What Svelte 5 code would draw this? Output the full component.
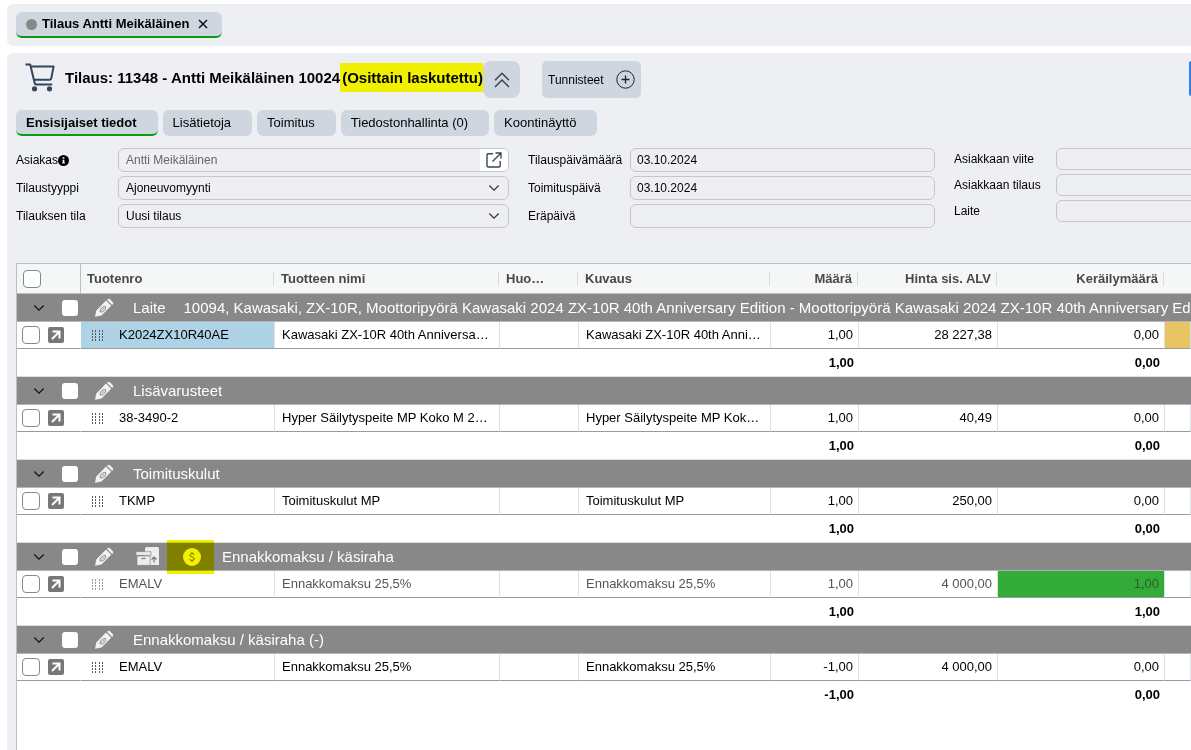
<script lang="ts">
let activeTab = $state(0);

const tabs = ['Ensisijaiset tiedot', 'Lisätietoja', 'Toimitus', 'Tiedostonhallinta (0)', 'Koontinäyttö'];

const dates = [
    { id: 'order-date', label: 'Tilauspäivämäärä', value: '03.10.2024' },
    { id: 'delivery-date', label: 'Toimituspäivä', value: '03.10.2024' },
    { id: 'due-date', label: 'Eräpäivä', value: '' },
];

const references = [
    { id: 'customer-ref', label: 'Asiakkaan viite' },
    { id: 'customer-order', label: 'Asiakkaan tilaus' },
    { id: 'device', label: 'Laite' },
];

const groups = [
    {
        name: 'Laite',
        detail: '10094, Kawasaki, ZX-10R, Moottoripyörä Kawasaki 2024 ZX-10R 40th Anniversary Edition - Moottoripyörä Kawasaki 2024 ZX-10R 40th Anniversary Edition',
        code: 'K2024ZX10R40AE', product: 'Kawasaki ZX-10R 40th Anniversa…', desc: 'Kawasaki ZX-10R 40th Anni…',
        qty: '1,00', price: '28 227,38', picked: '0,00', selected: true, warn: true,
    },
    {
        name: 'Lisävarusteet',
        code: '38-3490-2', product: 'Hyper Säilytyspeite MP Koko M 2…', desc: 'Hyper Säilytyspeite MP Kok…',
        qty: '1,00', price: '40,49', picked: '0,00',
    },
    {
        name: 'Toimituskulut',
        code: 'TKMP', product: 'Toimituskulut MP', desc: 'Toimituskulut MP',
        qty: '1,00', price: '250,00', picked: '0,00',
    },
    {
        name: 'Ennakkomaksu / käsiraha',
        code: 'EMALV', product: 'Ennakkomaksu 25,5%', desc: 'Ennakkomaksu 25,5%',
        qty: '1,00', price: '4 000,00', picked: '1,00', invoiced: true,
    },
    {
        name: 'Ennakkomaksu / käsiraha (-)',
        code: 'EMALV', product: 'Ennakkomaksu 25,5%', desc: 'Ennakkomaksu 25,5%',
        qty: '-1,00', price: '4 000,00', picked: '0,00',
    },
];
</script>

{#snippet chevron()}
    <svg class="chevron" width="12" height="8" viewBox="0 0 12 8" fill="none" stroke="currentColor" stroke-width="1.2"><path d="M1.300 1.500l4.700 4.700 4.700-4.700" /></svg>
{/snippet}

<div class="page">
    <nav class="windows">
        <div class="window-tab">
            <span class="dot"></span>
            <a href="#order">Tilaus Antti Meikäläinen</a>
            <button class="close" aria-label="Sulje">
                <svg width="10" height="10" viewBox="0 0 10 10" stroke="#111" stroke-width="1.5"><path d="M1 1l8 8M9 1l-8 8" /></svg>
            </button>
        </div>
    </nav>

    <main class="order" id="order">
        <header class="title-row">
            <svg class="cart" width="32" height="29" viewBox="0 0 32 29" fill="none" stroke="#36455a" stroke-width="2" stroke-linejoin="round">
                <path d="M.5 1.600h4.700l4.600 18.800q.4 1.200 1.600 1.200h15.800M6 3.600h22.600l-2.400 12q-.3 1.200-1.500 1.200H9" />
                <circle cx="9.500" cy="25.800" r="2.600" fill="#36455a" stroke="none" />
                <circle cx="24.500" cy="25.800" r="2.600" fill="#36455a" stroke="none" />
            </svg>
            <h1>Tilaus: 11348 - Antti Meikäläinen 10024<mark>(Osittain laskutettu)</mark></h1>
            <button class="collapse" aria-label="Piilota">
                <svg width="16" height="16" viewBox="0 0 16 16" fill="none" stroke="#36455a" stroke-width="1.5"><path d="M1 8.2L8 1.2l7 7M1 15L8 8l7 7" /></svg>
            </button>
            <button class="tags">
                Tunnisteet
                <svg width="19" height="19" viewBox="0 0 19 19" fill="none" stroke="#222"><circle cx="9.5" cy="9.5" r="8.7" /><path d="M9.5 5.5v8M5.5 9.5h8" stroke-width="1.3" /></svg>
            </button>
            <button class="primary" aria-label="Tallenna"></button>
        </header>

        <div class="tabs">
            {#each tabs as tab, i}
                <button class:active={activeTab === i} onclick={() => activeTab = i}>{tab}</button>
            {/each}
        </div>

        <form class="fields">
            <div class="column">
                <label for="customer">Asiakas<svg width="11" height="11" viewBox="0 0 10 10"><circle cx="5" cy="5" r="5" /><path d="M4.200 2h1.600v1.400H4.200zM4 4.300h1.800v2.600h.5v.9H3.800v-.9h.5V5.200H4z" fill="#fff" /></svg></label>
                <div class="control">
                    <input id="customer" value="Antti Meikäläinen" disabled>
                    <button class="open" type="button" aria-label="Avaa asiakas">
                        <svg width="16" height="16" viewBox="0 0 16 16" fill="none" stroke="#36455a" stroke-width="1.4"><path d="M7 1.800H2.200Q1 1.800 1 3v10.800Q1 15 2.200 15H13q1.200 0 1.200-1.200V9M9.500 1H15v5.500M15 1L6.500 9.500" /></svg>
                    </button>
                </div>
                <label for="type">Tilaustyyppi</label>
                <div class="control">
                    <select id="type"><option>Ajoneuvomyynti</option></select>
                    {@render chevron()}
                </div>
                <label for="state">Tilauksen tila</label>
                <div class="control">
                    <select id="state"><option>Uusi tilaus</option></select>
                    {@render chevron()}
                </div>
            </div>
            <div class="column dates">
                {#each dates as field}
                    <label for={field.id}>{field.label}</label>
                    <div class="control"><input id={field.id} value={field.value}></div>
                {/each}
            </div>
            <div class="column refs">
                {#each references as field}
                    <label for={field.id}>{field.label}</label>
                    <div class="control"><input id={field.id}></div>
                {/each}
            </div>
        </form>

        <div class="grid">
            <table>
                <colgroup>
                    <col class="c-select"><col class="c-code"><col class="c-name"><col class="c-note"><col class="c-desc">
                    <col class="c-qty"><col class="c-price"><col class="c-picked"><col>
                </colgroup>
                <thead>
                    <tr>
                        <th class="first"><input type="checkbox" aria-label="Valitse kaikki"></th>
                        <th><span>Tuotenro</span></th>
                        <th><span>Tuotteen nimi</span></th>
                        <th><span>Huo…</span></th>
                        <th><span>Kuvaus</span></th>
                        <th class="num"><span>Määrä</span></th>
                        <th class="num"><span>Hinta sis. ALV</span></th>
                        <th class="num"><span>Keräilymäärä</span></th>
                        <th></th>
                    </tr>
                </thead>
                {#each groups as group}
                    <tbody>
                        <tr class="group">
                            <td colspan="9">
                                <div class="group-line">
                                    <button class="toggle" aria-label="Avaa tai sulje">{@render chevron()}</button>
                                    <input type="checkbox" aria-label="Valitse ryhmä {group.name}">
                                    <button class="edit" aria-label="Muokkaa">
                                        <svg width="20" height="20" viewBox="0 0 20 20">
                                            <path d="M1 18.800l1.300-6.300L12 2.600l5.200 5.200-9.700 9.600z" fill="#f2f2f2" />
                                            <path d="M13 1.700l1-.8q.8-.6 1.700.2l3.200 3.200q.8.800.1 1.700l-.9.900z" fill="#f2f2f2" />
                                            <path d="M6.200 14q-.5-2.300 1.300-4.100t4.100-1.300q.5 2.300-1.300 4.100t-4.100 1.300zM7.700 12.500l2.400-2.400" fill="none" stroke="#888" />
                                        </svg>
                                    </button>
                                    {#if group.invoiced}
                                        <svg class="stock" width="24" height="20" viewBox="0 0 24 20">
                                            <path d="M9 1.500Q9 0 10.500 0h11Q23 0 23 1.500V18H9z" fill="#eee" />
                                            <path d="M0 4.700h15v3.600H0zM1 9h13v9.300H1z" fill="#eee" stroke="#888" stroke-width=".7" />
                                            <path d="M5.300 11.500h4.400" stroke="#888" stroke-width="1.300" />
                                            <path d="M18 15.500v-5M15.500 12.500L18 10l2.500 2.500" fill="none" stroke="#6a7a8a" stroke-width="1.200" />
                                        </svg>
                                        <span class="paid">
                                            <svg width="18" height="18" viewBox="0 0 18 18">
                                                <circle cx="9" cy="9" r="9" fill="#fff" />
                                                <path d="M11.300 6.800Q10.800 5.600 9 5.600T6.900 7.200Q6.900 8.500 9 8.900T11.300 10.900Q11.300 12.400 9 12.400T6.700 11.200M9 4v1.600M9 12.400V14" fill="none" stroke="#777" />
                                            </svg>
                                        </span>
                                    {/if}
                                    <span>{group.name}</span>
                                    {#if group.detail}<span class="detail">{group.detail}</span>{/if}
                                </div>
                            </td>
                        </tr>
                        <tr class="item" class:invoiced={group.invoiced}>
                            <td class="first">
                                <div class="tools">
                                    <input type="checkbox" aria-label="Valitse rivi {group.code}">
                                    <button class="jump" aria-label="Avaa tuote">
                                        <svg width="10" height="10" viewBox="0 0 10 10" fill="none" stroke="#fff" stroke-width="2"><path d="M1.500 1.500h7v7M8.500 1.500L1 9" /></svg>
                                    </button>
                                </div>
                            </td>
                            <td class:selected={group.selected}>
                                <div class="code">
                                    <svg width="13" height="11" viewBox="0 0 13 11" stroke="#555" stroke-width="1" stroke-dasharray="2 1"><path d="M1.500 0v11M4.500 0v11M8.500 0v11M11.500 0v11" /></svg>
                                    {group.code}
                                </div>
                            </td>
                            <td>{group.product}</td>
                            <td></td>
                            <td>{group.desc}</td>
                            <td class="num">{group.qty}</td>
                            <td class="num">{group.price}</td>
                            <td class="num" class:done={group.invoiced}>{group.picked}</td>
                            <td class:warn={group.warn}></td>
                        </tr>
                        <tr class="total">
                            <td colspan="5"></td>
                            <td class="num">{group.qty}</td>
                            <td></td>
                            <td class="num">{group.picked}</td>
                            <td></td>
                        </tr>
                    </tbody>
                {/each}
            </table>
        </div>
    </main>
</div>

<style>
:global(body) {
    margin: 0;
    overflow: hidden;
}
.page {
    box-sizing: border-box;
    min-height: 100vh;
    padding: 4px 0 0 7px;
    display: flex;
    flex-direction: column;
    gap: 7px;
    overflow: hidden;
    font: 12px/16px "Liberation Sans", Arial, sans-serif;
    color: #000;
    background: #fff;
}
button, input, select {
    box-sizing: border-box;
    margin: 0;
    font: inherit;
    color: inherit;
}
button {
    padding: 0;
    border: 0;
    background: none;
}
svg {
    display: block;
    flex: none;
}
.windows {
    padding: 8px 9px;
    display: flex;
    border-radius: 6px 0 0 6px;
    background: #edeff3;
}
.window-tab {
    display: flex;
    align-items: center;
    height: 24px;
    padding: 0 14px 0 10px;
    border-bottom: 2px solid #0a9a12;
    border-radius: 6px;
    background: #cfd6df;
    font-size: 13px;
    font-weight: bold;
}
.window-tab a {
    color: inherit;
    text-decoration: none;
}
.dot {
    width: 11px;
    height: 11px;
    margin-right: 5px;
    border-radius: 50%;
    background: #888;
}
.close {
    margin-left: 9px;
}
.order {
    flex: 1;
    display: flex;
    flex-direction: column;
    padding: 8px 0 0 9px;
    border-radius: 6px 0 0 0;
    background: #edeff3;
}
.title-row {
    display: flex;
    align-items: flex-start;
    height: 37px;
    padding-left: 9px;
}
.cart {
    margin: 2px 8px 0 0;
}
h1 {
    margin: 2px 0 0;
    font-size: 15px;
    line-height: 29px;
    font-weight: bold;
    white-space: nowrap;
}
mark {
    display: inline-block;
    padding: 0 0 0 2px;
    background: #f0f000;
}
.collapse, .tags {
    display: flex;
    align-items: center;
    justify-content: center;
    height: 37px;
    border-radius: 8px;
    background: #cfd6df;
}
.collapse {
    width: 37px;
}
.tags {
    gap: 12px;
    margin-left: 22px;
    padding: 0 6px;
    border-radius: 5px;
}
.primary {
    width: 2px;
    height: 35px;
    margin-left: auto;
    border-radius: 4px 0 0 4px;
    background: #2f80ed;
}
.tabs {
    display: flex;
    gap: 5px;
    margin-top: 12px;
}
.tabs button {
    height: 26px;
    padding: 0 21px 0 10px;
    border-radius: 6px;
    background: #cfd6df;
    font-size: 13px;
}
.tabs .active {
    padding-top: 2px;
    border-bottom: 2px solid #0a9a12;
    font-weight: bold;
}
.fields {
    display: grid;
    grid-template-columns: 493fr 407fr 237fr;
    gap: 19px;
    margin: 12px 0 35px;
}
.column {
    display: grid;
    grid-template-columns: 102px 1fr;
    grid-auto-rows: 24px;
    row-gap: 4px;
    align-content: start;
    align-items: center;
}
.refs {
    grid-auto-rows: 22px;
    margin-right: -20px;
}
.column label {
    display: flex;
    align-items: center;
    white-space: nowrap;
}
.control {
    box-sizing: border-box;
    position: relative;
    display: flex;
    height: 100%;
    overflow: hidden;
    border: 1px solid #c6c6c6;
    border-radius: 6px;
}
.control input, .control select {
    flex: 1;
    min-width: 0;
    padding: 0 7px;
    border: 0;
    outline: 0;
    background: none;
    appearance: none;
}
.dates input {
    padding: 0 6px;
}
.control input:disabled {
    color: #666;
}
.control .chevron {
    position: absolute;
    right: 8px;
    top: 7px;
    color: #333;
    pointer-events: none;
}
.open {
    padding: 0 6px;
    background: #fff;
}
.grid {
    flex: 1;
    overflow: hidden;
    border: solid #babfc7;
    border-width: 1px 0 0 1px;
    background: #fff;
    font-size: 13px;
}
table {
    width: 100%;
    table-layout: fixed;
    border-collapse: separate;
    border-spacing: 0;
}
.c-select {
    width: 64px;
}
.c-code {
    width: 194px;
}
.c-name {
    width: 225px;
}
.c-note {
    width: 79px;
}
.c-desc {
    width: 192px;
}
.c-qty {
    width: 88px;
}
.c-price {
    width: 139px;
}
.c-picked {
    width: 167px;
}
th, td {
    box-sizing: border-box;
    padding: 0;
    text-align: left;
    white-space: nowrap;
}
th {
    height: 30px;
    border-bottom: 1px solid #babfc7;
    background: #f5f7f7;
    color: #484848;
}
th.first {
    padding-left: 6px;
    border-right: 1px solid #babfc7;
}
th span {
    display: block;
    margin-right: 1px;
    padding: 0 5px 0 6px;
    border-right: 1px solid #d8dce2;
    line-height: 14px;
}
.num, .num span {
    text-align: right;
}
[type="checkbox"] {
    display: block;
    flex: none;
    width: 18px;
    height: 18px;
    border: 1px solid #7f8c8d;
    border-radius: 4px;
    appearance: none;
    background: #fff;
}
.group td {
    height: 28px;
    border-bottom: 1px solid #b5b5b5;
    background: #888;
    color: #fff;
    font-size: 15px;
}
.group-line {
    display: flex;
    align-items: center;
    height: 27px;
    padding-left: 16px;
}
.group-line [type="checkbox"] {
    width: 16px;
    height: 16px;
    margin: 0 16px 0 17px;
    border: 0;
    border-radius: 3px;
}
.toggle {
    color: #111;
}
.edit {
    margin-right: 19px;
}
.detail {
    margin-left: 18px;
}
.stock {
    margin: 0 7px 0 3px;
}
.paid {
    position: relative;
    padding: 0 13px 0 16px;
    margin-right: 8px;
}
/* highlighter mark, spills a little over the row edges */
.paid::after {
    content: '';
    position: absolute;
    inset: -8px 0;
    background: #f0f000;
    mix-blend-mode: multiply;
}
.item td {
    height: 27px;
    padding: 0 5px 0 7px;
    border-right: 1px solid #dde0e4;
    border-bottom: 1px solid #9a9a9a;
    background-clip: padding-box;
}
.item .first {
    padding: 0 0 0 5px;
    border-right-color: transparent;
}
.item .selected {
    background-color: #aed2e6;
}
.item .warn {
    background-color: #e8c562;
}
.item .done {
    background-color: #33ab38;
    color: #2f5a31;
}
.invoiced {
    color: #555;
}
.tools, .code {
    display: flex;
    align-items: center;
}
.tools {
    gap: 8px;
}
.jump {
    display: flex;
    align-items: center;
    justify-content: center;
    width: 16px;
    height: 16px;
    border-radius: 2px;
    background: #777;
}
.code {
    gap: 15px;
    padding-left: 3px;
}
.invoiced .code svg {
    opacity: 0.6;
}
.total td {
    height: 28px;
    padding-right: 5px;
    border-bottom: 1px solid #ddd;
    font-weight: bold;
}
tbody:last-child .total td {
    border-bottom: 0;
}
</style>
